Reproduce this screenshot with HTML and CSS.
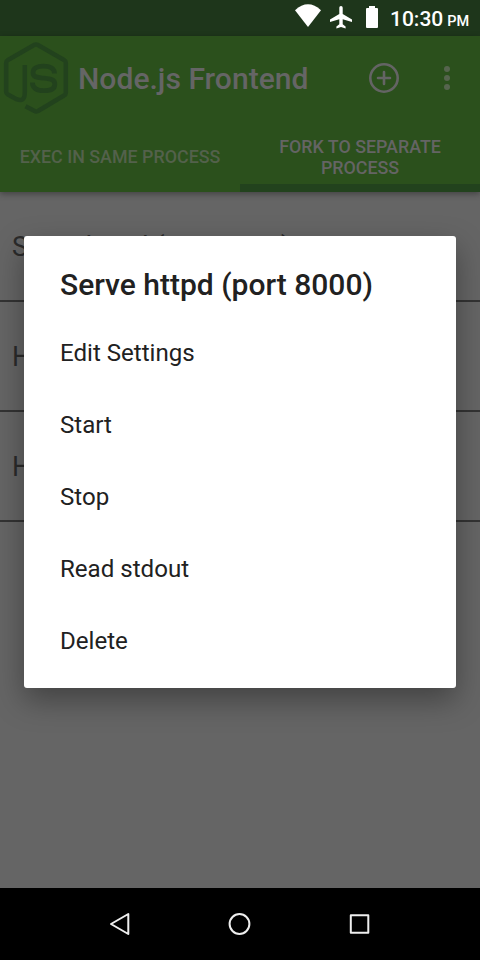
FILE: index.html
```
<!DOCTYPE html>
<html lang="en">
<head>
<meta charset="utf-8">
<title>Node.js Frontend</title>
<link rel="stylesheet" href="styles.css">
</head>
<body>
<div class="screen">
  <div class="status">
    <svg class="status-icons" width="96" height="36" viewBox="0 0 96 36">
      <g fill="#fff">
        <path d="M3 10.2Q16-1.700 29 10.200L16 27Z"/>
        <path transform="translate(8 0)" d="M41 5.900c1.100 0 1.700.8 1.700 1.900v6.100L52 19.600v2.300l-9.300-2.700v5l2.900 2.200v2L41 27.100l-4.600 1.300v-2l2.900-2.200v-5L30 21.900v-2.300l9.300-5.700V7.800c0-1.100.6-1.900 1.700-1.900Z"/>
        <path transform="translate(8 0)" d="M69 6h6v2h2q1 0 1 1v18q0 1-1 1H67q-1 0-1-1V9q0-1 1-1h2Z"/>
      </g>
    </svg>
    <span class="clock">10:30</span><span class="meridiem">PM</span>
  </div>
  <header class="appbar">
    <div class="toolbar">
      <svg class="logo" width="72" height="84" viewBox="0 0 72 84" fill="none" stroke="#22421d" stroke-linejoin="round">
        <path stroke-width="4.500" d="M24.800 29V56.500Q24.800 66.500 16.500 63.200L7.500 58.200Q6.200 57.500 6.200 56V26.500Q6.200 25 8 24L34.500 8.800Q36 8 37.500 8.800L64 24Q65.800 25 65.800 26.500V57Q65.800 58.500 64 59.500L38 75Q36 76 34.500 75L25.500 70.200"/>
        <path stroke-width="4.800" d="M54.500 37.500C54.500 32 50 30.200 43.500 30.200C37 30.200 33 32.500 33 36.500C33 41.500 37.500 41.500 44 42.200C51 43 54.800 43.500 54.800 48.200C54.800 53 50.500 54.700 44 54.700C36 54.700 32.400 51.500 32.400 46.500"/>
      </svg>
      <h1 class="title">Node.js Frontend</h1>
      <svg class="actions" width="120" height="84" viewBox="0 0 120 84">
        <g fill="none" stroke="#646464" stroke-width="2.600">
          <circle cx="24" cy="42" r="13.700"/>
          <path stroke-linecap="round" d="M24 36v12M18 42h12"/>
        </g>
        <g fill="#56644e"><circle cx="87" cy="33" r="3"/><circle cx="87" cy="42" r="3"/><circle cx="87" cy="51" r="3"/></g>
      </svg>
    </div>
    <nav class="tabs">
      <div class="tab">EXEC IN SAME PROCESS</div>
      <div class="tab active">FORK TO SEPARATE PROCESS</div>
    </nav>
  </header>
  <main class="list">
    <div class="row">Serve httpd (port 8000)</div>
    <div class="row">Hello World</div>
    <div class="row">Hello World</div>
  </main>
  <div class="navbar">
    <svg width="300" height="72" viewBox="0 0 300 72" fill="none" stroke="#eee" stroke-width="2" stroke-linejoin="round">
      <path d="M38.300 26V46L21 36Z"/>
      <circle cx="149.500" cy="36" r="9.900"/>
      <rect x="260.800" y="27.200" width="17.500" height="17.500"/>
    </svg>
  </div>
  <div class="dialog">
    <h2 class="dialog-title">Serve httpd (port 8000)</h2>
    <div class="item">Edit Settings</div>
    <div class="item">Start</div>
    <div class="item">Stop</div>
    <div class="item">Read stdout</div>
    <div class="item">Delete</div>
  </div>
</div>
</body>
</html>
```
FILE: styles.css
```
* { box-sizing: border-box; }
body { margin: 0; font-family: Roboto, sans-serif; }
svg { display: block; flex: none; }
.screen {
  position: relative;
  display: flex;
  flex-direction: column;
  width: 480px;
  height: 960px;
  overflow: hidden;
  background: #656565;
}
.status {
  display: flex;
  align-items: baseline;
  flex: none;
  height: 36px;
  padding-left: 292px;
  background: #1e361b;
  color: #fff;
  font-weight: 500;
  line-height: 38px;
}
.status-icons { align-self: flex-start; }
.clock { margin-left: 2px; font-size: 21px; }
.meridiem { margin-left: 4px; font-size: 14.500px; }
.appbar {
  position: relative;
  flex: none;
  height: 156px;
  background: #2b501c;
  box-shadow: 0 2px 6px rgba(0, 0, 0, 0.35);
}
.toolbar { display: flex; height: 84px; }
.title {
  width: 288px;
  margin: 0;
  padding-left: 6px;
  color: #656565;
  font-size: 30.100px;
  font-weight: 500;
  line-height: 85px;
  white-space: nowrap;
}
.tabs { display: flex; height: 72px; }
.tab {
  display: flex;
  align-items: center;
  justify-content: center;
  width: 240px;
  padding: 0 18px;
  color: #53614b;
  font-size: 17.850px;
  font-weight: 500;
  line-height: 21px;
  text-align: center;
}
.tab.active {
  padding: 9px 18px 0;
  color: #646464;
  border-bottom: 8px solid #22421d;
}
.list { flex: 1; }
.row {
  height: 110px;
  padding-left: 12px;
  border-bottom: 2px solid #333;
  color: #2b2b2b;
  font-size: 27px;
  line-height: 111px;
}
.navbar {
  display: flex;
  justify-content: center;
  flex: none;
  height: 72px;
  background: #000;
}
.dialog {
  position: absolute;
  left: 24px;
  top: 236px;
  width: 432px;
  height: 452px;
  padding: 27px 36px 0;
  border-radius: 3px;
  background: #fff;
  color: #212121;
  box-shadow: 0 12px 30px rgba(0, 0, 0, 0.35);
}
.dialog-title {
  margin: 0 0 10px;
  font-size: 30px;
  font-weight: 500;
  line-height: 44px;
}
.item { height: 72px; font-size: 24.100px; line-height: 72px; }
```
